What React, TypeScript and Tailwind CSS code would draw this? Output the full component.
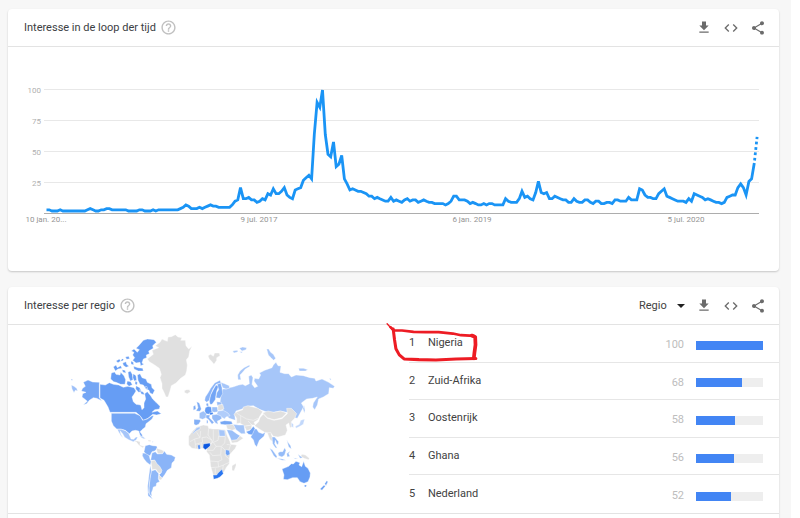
import type { ReactNode } from "react";
import { MdCode, MdFileDownload, MdHelpOutline, MdShare } from "react-icons/md";

const interest = [
  3, 3, 2, 2, 2, 3, 2, 2, 2, 2, 2, 2, 2, 2, 2, 3, 4, 3, 2, 2, 3, 3, 4, 4, 3, 3, 3, 3, 3, 3,
  2, 2, 2, 2, 3, 3, 2, 2, 2, 3, 2, 3, 3, 3, 3, 3, 3, 3, 3, 4, 5, 7, 6, 4, 4, 4, 5, 4, 5, 6,
  7, 6, 6, 5, 5, 5, 5, 5, 7, 10, 11, 21, 12, 12, 13, 11, 11, 9, 10, 12, 11, 16, 15, 20, 16, 16, 18, 21, 15, 13,
  12, 19, 20, 21, 27, 29, 31, 28, 64, 90, 86, 100, 64, 48, 46, 58, 38, 40, 47, 28, 24, 19, 20, 19, 18, 18, 17, 16, 14, 14,
  12, 13, 12, 11, 10, 10, 13, 10, 11, 10, 9, 11, 12, 10, 11, 11, 9, 10, 11, 10, 9, 9, 8, 8, 8, 8, 7, 8, 10, 14,
  14, 11, 11, 11, 10, 8, 9, 8, 7, 7, 8, 7, 8, 8, 7, 7, 7, 7, 12, 10, 9, 9, 9, 12, 18, 13, 14, 12, 11, 17,
  26, 17, 16, 17, 12, 12, 14, 13, 12, 11, 11, 9, 9, 12, 10, 9, 9, 11, 11, 9, 8, 10, 10, 8, 8, 9, 9, 8, 11, 11,
  10, 10, 10, 13, 11, 11, 11, 20, 19, 15, 13, 13, 12, 12, 16, 18, 20, 14, 13, 12, 11, 10, 10, 10, 9, 12, 10, 16, 15, 14,
  13, 11, 12, 11, 10, 9, 9, 8, 9, 13, 14, 15, 15, 21, 24, 21, 15, 26, 28, 41, 62,
];

const regions = [
  { name: "Nigeria", value: 100 },
  { name: "Zuid-Afrika", value: 68 },
  { name: "Oostenrijk", value: 58 },
  { name: "Ghana", value: 56 },
  { name: "Nederland", value: 52 },
];

const dates = [
  { label: "10 jan. 20...", x: 38 },
  { label: "9 jul. 2017", x: 251 },
  { label: "6 jan. 2019", x: 464 },
  { label: "5 jul. 2020", x: 678 },
];

const px = (i: number) => 38.5 + i * 2.733;
const py = (v: number) => 166.5 - v * 1.235;
const toPoints = (from: number, to: number) =>
  interest
    .slice(from, to)
    .map((v, i) => `${px(from + i).toFixed(1)},${py(v).toFixed(1)}`)
    .join(" ");

function IconButton({ label, children }: { label: string; children: ReactNode }) {
  return (
    <button type="button" aria-label={label} className="flex size-4 items-center justify-center text-[#6b6b6b]">
      {children}
    </button>
  );
}

function CardHeader({ title, children }: { title: string; children?: ReactNode }) {
  return (
    <header className="flex h-[38px] items-center justify-between border-b border-[#e3e3e3] pr-[13px] pl-4">
      <div className="flex items-center gap-1">
        <h2 className="text-[11px] leading-4 text-[#3c4043]">{title}</h2>
        <button type="button" aria-label="Help" className="text-[#c0c0c0]">
          <MdHelpOutline size={17} />
        </button>
      </div>
      <div className="flex items-center gap-[11px]">
        {children}
        <IconButton label="Download">
          <MdFileDownload size={17} />
        </IconButton>
        <IconButton label="Embed">
          <MdCode size={16} />
        </IconButton>
        <IconButton label="Share">
          <MdShare size={16} />
        </IconButton>
      </div>
    </header>
  );
}

function TimeChart() {
  const last = interest.length - 1;
  return (
    <svg viewBox="0 0 771 224" className="block w-full" role="img" aria-label="Interesse in de loop der tijd">
      {[100, 75, 50, 25].map((v) => (
        <g key={v}>
          <line x1="36" x2="751" y1={Math.round(py(v)) - 0.5} y2={Math.round(py(v)) - 0.5} stroke="#e8e8e8" strokeWidth="1" />
          <text x="33" y={py(v) + 3} textAnchor="end" fontSize="8" fill="#b0b0b0">
            {v}
          </text>
        </g>
      ))}
      <line x1="36" x2="751" y1="166.5" y2="166.5" stroke="#adadad" />
      {dates.map((d) => (
        <text key={d.label} x={d.x} y="175" textAnchor="middle" fontSize="8" fill="#949494">
          {d.label}
        </text>
      ))}
      <polyline points={toPoints(0, last)} fill="none" stroke="#1a94f5" strokeWidth="2.8" />
      <polyline points={toPoints(last - 1, last + 1)} fill="none" stroke="#1a94f5" strokeWidth="2.8" strokeDasharray="2.7 2.7" strokeDashoffset="-2.4" />
    </svg>
  );
}

const GRAY = "#e0e0e0";

// [fill, outline]
const americas: [string, string][] = [
  ["#74a6f5", "M70 172 84 165 98 171 118 172V218L126 228 110 220 100 218 88 226 80 236 70 239 82 229 74 222 66 216 68 206 78 202 64 198 68 190 76 184Z"],
  ["#9cbff8", "M34 180 42 184 50 190 53 198 46 196 42 203 36 192ZM33 162l4 0 1 4-4 0Z"],
  ["#669df4", "M120 178 136 180 148 173 160 178 176 180 190 187 204 184 222 188 228 198 222 208 216 216 220 230 228 238 242 240 246 254 252 248 252 234 257 222 254 206 262 200 272 212 278 222 288 232 300 244 298 252 284 254 276 262 292 258 304 266 290 270 278 268 264 280 250 286 240 272 228 262H150L144 246 132 226 120 219Z"],
  ["#669df4", "M154 144 164 141 168 148 180 150 182 142 192 152 197 164 195 178 182 178 168 172 161 170 152 162Z"],
  ["#669df4", "M232 150 240 146 246 158 258 162 262 172 274 178 276 188 284 196 278 208 270 204 267 196 258 192 250 180 240 178 234 166Z"],
  ["#669df4", "M236 62 250 46 262 42 272 43 282 44 289 52 278 62 280 70 266 78 268 86 259 90 260 98 250 102 246 114 252 118 242 122 240 112 228 114 218 106 224 98 218 90 222 82 214 78 222 72 232 82 238 74 228 70Z"],
  ["#669df4", "M160 126 168 120 172 128 182 122 186 130 174 132 166 138ZM168 108l10-6 4 6-8 5ZM188 114l10-4 2 8 7 6-9 3-8-6ZM196 96l10-2 3 7-9 2ZM204 142l7-4 6 10 2 16-8 4-5-12ZM202 168l10 2 5 9-10 5-7-7ZM221 124l13 4 14 2 2 8-15 0-13-6ZM220 146l8 6 2 14-7 2-5-10ZM228 182l11 6 6 12-9 2-9-10ZM186 134l9 2 3 8-9-2ZM213 108l7 4 1 8-8-3ZM182 106l6-5 3 3-5 5ZM256 184l5 1 2 7-7-3ZM226 168l6 4-1 8-6-3ZM238 194l12 8 4 7-10-2Z"],
  [GRAY, "M300 52 306 42 314 46 322 49 324 36 334 35 346 29 354 36 366 38 362 46 376 46 378 62 386 72 396 64 389 78 386 96 379 104 382 120 380 138 376 150 362 160 348 174 334 182 330 198 324 216 318 216 312 202 306 190 306 176 300 158 304 148 298 130 284 120 268 110 262 102 280 88 276 76 296 68 286 62Z"],
  [GRAY, "M373 197 380 194 388 194 391 200 382 206 374 203Z"],
  ["#74a6f5", "M154 265H224L240 272 248 286 262 282 276 272 281 272 276 282 264 292 258 296 256 306 246 314 240 320 247 330 246 338 240 330 236 318 226 316 216 318 208 326 196 316 182 312 170 312 160 302 154 288Z"],
  ["#a5c5f9", "M172 313H184L196 317 206 325 209 332 213 342 221 343 228 336 233 337 228 346 220 350 206 344 194 337 188 326 180 317 182 326 189 339 183 332 176 321Z"],
  [GRAY, "M222 348 232 348 240 350 240 360 250 364 256 362 248 368 236 360 230 352ZM264 345l9 1-2 4-7-2Z"],
  ["#b5d0fa", "M238 334 248 334 257 341 250 341ZM276 349l5 2-5 1Z"],
  ["#82aff6", "M256 362 268 359 278 362 290 363 292 370 284 378 276 380 270 392 260 390 252 380Z"],
  [GRAY, "M289 370 304 374 312 378 308 386 293 386Z"],
  ["#8db6f7", "M248 384 256 385 268 392 270 402 274 410 271 420 260 412 252 402 247 392Z"],
  ["#8ab4f8", "M276 384 286 380 292 387 308 386 313 378 320 388 334 390 346 397 343 407 336 414 334 428 322 436 315 448 306 460 297 450 304 442 300 430 288 416 284 406 272 406Z"],
  [GRAY, "M273 408 284 405 291 416 299 424 306 436 302 445 294 443 288 433 276 434Z"],
  [GRAY, "M297 450 307 459 303 465 296 463Z"],
  ["#8fb8f8", "M274 438 286 434 296 446 295 462 299 470 290 474 288 484 280 486 278 494 274 504 276 514 268 508 267 488 270 460Z"],
  ["#8db6f7", "M271 420 274 438 270 460 267 486 266 503 278 523 264 512 263 484 267 450Z"],
];

const oldWorld: [string, string][] = [
  ["#a6c6f9", "M94 202 98 192 108 192 116 188 128 186 146 180 158 178 166 182 178 176 176 154 184 150 189 158 186 178 194 188 203 184 192 168 194 160 206 162 212 150 208 144 224 136 246 128 250 120 258 112 264 122 273 123 270 142 284 146 296 146 304 156 318 150 340 152 360 158 374 160 378 168 396 162 416 172 434 184 430 190 418 188 416 206 400 216 386 222 382 240 374 254 368 246 370 234 382 216 368 220 350 222 334 234 341 246 334 258 322 280 314 278 316 264 304 252 290 262 270 258 250 262 232 262 206 252 190 242 172 244 156 252 138 258 134 268 136 286 118 280 106 270 98 258 98 244 90 232 92 216Z"],
  ["#a6c6f9", "M92 172 104 176 118 182 118 190 108 192 98 188Z"],
  ["#a6c6f9", "M144 164 143 150 150 138 162 128 178 120 180 124 166 132 156 144 150 150 153 164ZM230 72l6 0 6 10 8 6 7 12-6 6-8-8-8-8ZM326 130l14 0 14 4-8 4-18 0ZM128 78l14-2 2 4-12 4ZM148 70l10-4 12 2-2 6-12 4ZM148 80l10 0-3 4ZM342 240l3 16-2 9-4-14ZM418 160l6 2-3 4Z"],
  [GRAY, "M54 92 62 88 70 94 74 84 88 84 90 92 80 98 80 106 72 118 64 108 58 102Z"],
  ["#8ab4f8", "M46 216 54 204 62 190 74 174 90 166 93 174 78 178 68 194 62 210 58 226 50 232 44 226Z"],
  ["#73a5f5", "M58 228 62 210 70 194 78 180 86 184 80 198 78 210 76 224 66 238 60 238Z"],
  ["#82aff6", "M82 178 92 174 96 188 98 206 90 220 78 218 80 204 86 194Z"],
  ["#7aaaf5", "M20 230 28 234 34 252 30 259 18 258 24 248ZM10 244 16 241 18 252 10 256ZM48 236l6-2 2 8-6 2Z"],
  ["#a0c2f8", "M28 264 40 258 50 266 48 278 38 283 28 280Z"],
  ["#82aff6", "M12 283 30 284 32 288 26 298 18 301 12 298Z"],
  ["#639bf4", "M46 248 54 244 64 246 66 262 58 268 48 266 44 258Z"],
  ["#9cc0f8", "M66 246 82 246 84 260 74 262 66 260Z"],
  ["#92b9f8", "M80 230 94 232 94 240 82 242Z"],
  [GRAY, "M84 240 98 238 102 252 92 256 84 256Z"],
  ["#b1cdfa", "M84 258 100 256 114 264 120 272 108 276 104 282 90 274 80 268Z"],
  ["#88b2f7", "M48 270 60 270 58 278 72 292 66 298 56 284 48 278ZM50 286l4 0 0 9-4 0Z"],
  ["#3f82ee", "M58 264 68 262 70 268 60 270Z"],
  ["#95bbf7", "M66 270 80 268 92 272 96 280 88 286 82 288 84 298 76 294 66 280Z"],
  ["#76a7f4", "M90 290 104 287 124 289 128 296 120 300 104 299 92 298Z"],
  [GRAY, "M132 268 138 262 158 254 160 246 174 242 204 250 218 260 208 276 204 284 192 292 196 300 186 300 164 304 150 294 140 296 140 280Z"],
  [GRAY, "M218 264 234 258 252 262 272 258 290 264 276 278 252 284 232 278Z"],
  [GRAY, "M290 250 304 250 320 266 314 280 304 290 306 306 300 308 296 294 288 300 292 316 286 330 264 336 250 334 244 326 224 322 208 312 194 302 206 290 210 278 220 267 232 280 252 286 276 281 292 266Z"],
  [GRAY, "M108 300 130 298 138 312 126 316 112 312ZM163 304 186 300 184 312 170 318ZM122 344 140 344 150 332 160 340 142 352 126 354Z"],
  ["#a3c4f8", "M130 298 146 300 162 300 166 326 154 326 138 314Z"],
  ["#9abff8", "M110 314 126 316 140 326 150 332 140 344 124 346Z"],
  ["#73a5f5", "M168 320 180 316 190 304 196 312 188 330 176 328Z"],
  ["#8ab4f8", "M188 326 194 312 200 312 206 322 218 326 226 322 222 334 208 346 200 366 194 358 190 344 182 336Z"],
  [GRAY, "M232 324 242 322 246 334 252 354 246 348 240 344ZM336 388l10 2 12 10-2 4-14-4-10-6Z"],
  ["#94bbf8", "M246 336 254 336 266 350 264 360 260 356 256 346 254 356 262 370 256 368 248 356ZM239 370l8 4 14 20-2 6-8-8ZM264 384l6-4 8 0 6-12 4 8-4 14-8 6-10-4ZM260 400l18 2 10 4-12 0ZM290 386l10-8-4 8 4 8-8 2ZM290 344l4 8 8 10 2 10-8-6ZM310 398l14 4-8 0ZM324 388l6 4 8 6-8 2Z"],
  ["#c2d8fb", "M332 286 344 282 340 298 330 304 318 310 316 304 328 298ZM304 292l6 6 0 10-6-4Z"],
  [GRAY, "M8 318 20 306 40 300 54 302 56 310 68 312 84 312 106 314 110 328 120 350 122 358 140 360 136 370 120 388 118 402 118 416 110 426 98 448 84 460 72 462 68 444 62 424 60 406 58 390 50 380 50 372 40 370 24 372 6 370-4 360-4 334Z"],
  ["#a6c6f9", "M8 324 20 308 30 305 30 312 18 318 10 326Z"],
  ["#a6c6f9", "M86 314 104 316 106 334H88Z"],
  ["#0b57e0", "M40 357 60 354 61 362 52 370 46 374 39 368Z"],
  ["#4a89f3", "M23 361 30 359 31 372 25 373Z"],
  ["#73a5f5", "M106 374 118 376 120 388 112 392 106 386Z"],
  [GRAY, "M126 422 138 415 138 422 132 438 126 436Z"],
  ["#2a76f0", "M69 450 80 450 84 444 96 433 100 446 90 456 82 460 71 463Z"],
  ["#669df4", "M276 432 296 424 304 416 310 417 318 409 330 413 327 420 335 425 341 409 346 424 354 430 361 444 360 456 354 470 342 475 330 470 322 458 308 458 292 464 280 463 282 450ZM343 480l7 0-2 6-4 0Z"],
  ["#74a6f5", "M404 476 410 467 414 470 408 482ZM390 492 402 480 406 484 396 496Z"],
];

// thin lines between neighbouring states
const borders =
  "M0 350 14 342 30 338 20 322M14 342 16 358 38 352 36 338 50 336 66 346V354L60 356M30 338 32 318M56 310 54 330 66 346M70 314V346L60 364M86 332 84 346 70 352 78 364 94 364 104 354 106 336M88 334H106M78 364 70 376 52 376M94 364 106 376 106 392 118 402M94 366 92 390 96 404 84 410 60 408M84 410 86 426 62 428M86 426 100 420 118 412M100 420 98 434M76 430V446M16 358V370M34 354V372M140 264 152 272 170 282 190 286 204 280M152 272V294M174 288 186 300M60 382 68 392 90 390M110 358 122 360 116 376";

function WorldMap() {
  return (
    <svg viewBox="0 0 840 540" className="block w-full max-w-[280px]" role="img" aria-label="Interesse per regio">
      <g stroke="#fff" strokeWidth="1.2" strokeLinejoin="round">
        {americas.map(([fill, d]) => (
          <path key={d} fill={fill} d={d} />
        ))}
        <g transform="translate(390 0)">
          {oldWorld.map(([fill, d]) => (
            <path key={d} fill={fill} d={d} />
          ))}
          <path d={borders} fill="none" />
        </g>
      </g>
    </svg>
  );
}

function Marker() {
  return (
    <svg viewBox="0 0 280 124" className="pointer-events-none absolute -top-1 -left-6 h-[42px] w-[95px]" aria-hidden="true">
      <g fill="none" stroke="#ed1c24" strokeLinecap="round" strokeLinejoin="round">
        <path strokeWidth="4" d="M6 8 24 28" />
        <path strokeWidth="8" d="M16 18 26 28 50 28 84 32 120 33 158 33 200 37 224 42 262 44" />
        <path strokeWidth="9" d="M24 24 28 56 32 82 42 100 56 112 100 114 150 115 210 112 268 111" />
        <path strokeWidth="11" d="M256 43 266 47 267 70 264 92 262 110" />
      </g>
    </svg>
  );
}

export default function App() {
  return (
    <div className="min-h-screen bg-white pr-[9px] font-[family-name:Roboto,sans-serif]">
      <main className="flex min-h-screen flex-col gap-4 bg-[#f7f7f7] pt-[9px] pr-3 pl-2">
        <section className="rounded-sm bg-white shadow-[0_1px_2px_rgba(0,0,0,0.2)]">
          <CardHeader title="Interesse in de loop der tijd" />
          <TimeChart />
        </section>

        <section className="flex-1 rounded-t-sm bg-white shadow-[0_1px_2px_rgba(0,0,0,0.2)]">
          <CardHeader title="Interesse per regio">
            <div className="relative flex items-center">
              <select aria-label="Regio" className="w-[46px] appearance-none bg-transparent text-[11px] leading-4 text-[#424242]">
                <option>Regio</option>
              </select>
              <svg viewBox="0 0 8 4" className="pointer-events-none absolute right-0 h-1 w-2" aria-hidden="true">
                <path d="M0 0h8L4 4Z" fill="#212121" />
              </svg>
            </div>
          </CardHeader>
          <div className="flex border-b border-[#e3e3e3]">
            <div className="w-[52%] shrink-0 pl-[52px]">
              <WorldMap />
            </div>
            <ol className="grid h-[188px] flex-1 auto-rows-fr">
              {regions.map((r, i) => (
                <li key={r.name} className="relative flex items-center border-b border-[#e6e6e6] pr-4 text-[11px] leading-4 text-[#424242] last:border-b-0">
                  <span className="w-[19px]">{i + 1}</span>
                  <span className="flex-1">{r.name}</span>
                  <span className="pt-1 pr-3 text-[#bdbdbd]">{r.value}</span>
                  <span className="mt-1 h-[9px] w-[67px] bg-[#eeeeee]">
                    <span className="block h-full bg-[#4285f4]" style={{ width: `${r.value}%` }} />
                  </span>
                  {i === 0 && <Marker />}
                </li>
              ))}
            </ol>
          </div>
        </section>
      </main>
    </div>
  );
}
